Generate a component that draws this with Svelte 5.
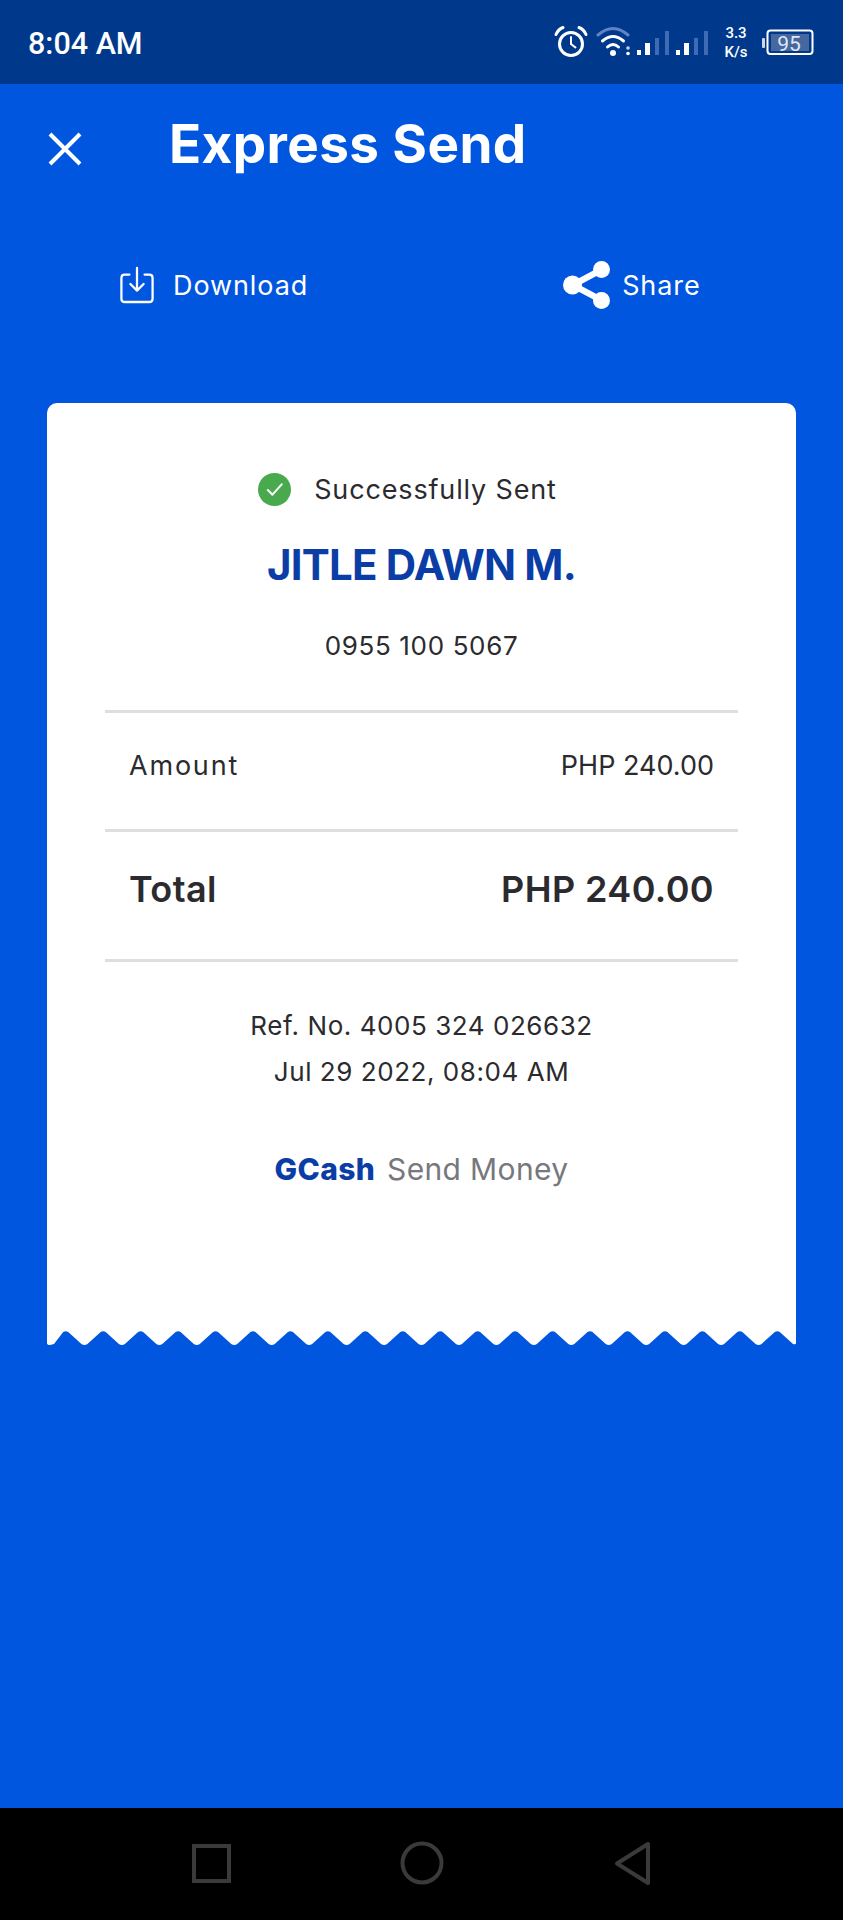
<script>
  const transaction = {
    recipient: 'JITLE DAWN M.',
    phone: '0955 100 5067',
    amount: 'PHP 240.00',
    reference: 'Ref. No. 4005 324 026632',
    date: 'Jul 29 2022, 08:04 AM',
  };

  // Torn paper edge along the bottom of the receipt
  const teeth = 20;
  const toothWidth = 749 / teeth;
  let edge = 'M0 0V12Q0 14 3 14';
  for (let i = 0; i < teeth; i++) {
    const x = i * toothWidth;
    const mid = x + toothWidth / 2;
    if (i > 0) edge += `Q${x} 15 ${x + 3} 13`;
    else edge += `L${x + 7} 13`;
    edge += `L${mid - 2.5} 1`;
    edge += `Q${mid} -0.5 ${mid + 2.5} 1`;
    edge += `L${x + toothWidth - 3} 13`;
  }
  edge += 'Q749 14 749 12V0Z';

  const signalGroups = [639, 678];
</script>

<div class="screen">
  <div class="status-bar">
    <span class="clock">8:04 AM</span>
    <svg class="status-icons" width="270" height="40" viewBox="550 24 270 40">
      <!-- alarm -->
      <g fill="none" stroke="#fff" stroke-linecap="round">
        <circle cx="571" cy="44" r="11.500" stroke-width="3" />
        <path d="M571 37v7l4.500 3.500" stroke-width="2" />
        <path d="M556 34.500q2-5 7-7M586 34.500q-2-5-7-7" stroke-width="3" />
      </g>
      <!-- wifi -->
      <g fill="none" stroke-linecap="round">
        <path d="M598 35q15-13 30 0" stroke="#5f83c4" stroke-width="3" />
        <path d="M602.500 41q10.500-9 21 0" stroke="#fff" stroke-width="3" />
        <path d="M607.500 47q5.500-5 11 0" stroke="#fff" stroke-width="3" />
      </g>
      <circle cx="613" cy="53" r="3" fill="#fff" />
      <circle cx="628" cy="48" r="1.800" fill="#c8d4ea" />
      <circle cx="628" cy="53.500" r="1.800" fill="#fff" />
      <!-- signal bars -->
      {#each signalGroups as x}
        <rect x={x - 2} y="50" width="4" height="5" fill="#fff" />
        <rect x={x + 6} y="43" width="5" height="12" fill="#fff" />
        <rect x={x + 16} y="38" width="4" height="17" fill="#3f6ab4" />
        <rect x={x + 26} y="31" width="4" height="24" fill="#3f6ab4" />
      {/each}
      <!-- network speed -->
      <text x="736" y="38" class="speed">3.3</text>
      <text x="736" y="57" class="speed">K/s</text>
      <!-- battery -->
      <rect x="762" y="38" width="3" height="10" rx="1" fill="#fff" opacity="0.8" />
      <rect x="767.500" y="30.500" width="45" height="23.500" rx="3" fill="none" stroke="#fff" stroke-width="2" />
      <rect x="771" y="34" width="38" height="17" fill="#45689f" />
      <text x="789" y="50.500" class="level">95</text>
    </svg>
  </div>

  <main class="content">
    <header class="title-row">
      <svg class="close" width="34" height="34" viewBox="0 0 34 34">
        <path d="M2 2l30 30M32 2L2 32" fill="none" stroke="#fff" stroke-width="4" />
      </svg>
      <h1>Express Send</h1>
    </header>

    <div class="actions">
      <div class="action download">
        <svg width="34" height="40" viewBox="0 0 36 40" fill="none" stroke="#fff" stroke-width="2.400" stroke-linecap="round" stroke-linejoin="round">
          <path d="M10 9H5q-3.500 0-3.500 3.500v22q0 3.500 3.500 3.500h26q3.500 0 3.500-3.500v-22q0-3.500-3.500-3.500h-5" />
          <path d="M18 2v24M11 19l7 7 7-7" />
        </svg>
        <span>Download</span>
      </div>
      <div class="action share">
        <svg width="48" height="48" viewBox="0 0 48 48">
          <path d="M38 9L10 24l28 15" fill="none" stroke="#fff" stroke-width="6.500" />
          <circle cx="38.500" cy="8.500" r="8.500" fill="#fff" />
          <circle cx="9.500" cy="24" r="9.500" fill="#fff" />
          <circle cx="38.500" cy="39.500" r="8.500" fill="#fff" />
        </svg>
        <span>Share</span>
      </div>
    </div>

    <section class="receipt">
      <div class="paper">
        <div class="sent">
          <svg width="33" height="33" viewBox="0 0 32 32">
            <circle cx="16" cy="16" r="16" fill="#48a94d" />
            <path d="M9.500 16.500l4.500 4.500 9-10" fill="none" stroke="#fff" stroke-width="2" stroke-linecap="round" stroke-linejoin="round" />
          </svg>
          <span>Successfully Sent</span>
        </div>
        <div class="recipient">{transaction.recipient}</div>
        <div class="phone">{transaction.phone}</div>

        <div class="row amount">
          <span class="label">Amount</span>
          <span>{transaction.amount}</span>
        </div>
        <div class="row total">
          <span>Total</span>
          <span>{transaction.amount}</span>
        </div>

        <div class="meta">
          <div>{transaction.reference}</div>
          <div>{transaction.date}</div>
        </div>

        <div class="brand">
          <b>GCash</b>
          <span>Send Money</span>
        </div>
      </div>
      <svg class="edge" width="749" height="15" viewBox="0 0 749 15">
        <path d={edge} fill="#fff" />
      </svg>
    </section>
  </main>

  <nav class="nav-bar">
    <svg width="843" height="112" viewBox="0 0 843 112" fill="none" stroke="#3a3a3a" stroke-width="4">
      <rect x="194" y="38" width="35" height="35" />
      <circle cx="422" cy="55" r="19.500" />
      <path d="M648 36v39l-31-19.500z" stroke-linejoin="round" />
    </svg>
  </nav>
</div>

<style>
  :global(body) {
    margin: 0;
    background: #0056df;
  }

  .screen {
    width: 843px;
    height: 1920px;
    display: flex;
    flex-direction: column;
    font-family: Inter, 'Liberation Sans', sans-serif;
    color: #2b2b2f;
  }

  .status-bar {
    height: 84px;
    flex-shrink: 0;
    background: #00398c;
    display: flex;
    align-items: center;
    justify-content: space-between;
    padding: 0 23px 0 28px;
    color: #fff;
  }

  .clock {
    font-family: Roboto, sans-serif;
    font-size: 30.5px;
    font-weight: 500;
    padding-top: 2px;
  }

  .status-icons {
    display: block;
    margin-top: 4px;
  }

  .speed {
    fill: #fff;
    font-family: Roboto, sans-serif;
    font-size: 15px;
    font-weight: 500;
    text-anchor: middle;
  }

  .level {
    fill: #dfe6f2;
    font-family: Roboto, sans-serif;
    font-size: 21px;
    text-anchor: middle;
  }

  .content {
    flex: 1;
    background: #0056df;
  }

  .title-row {
    display: flex;
    align-items: center;
    padding: 25px 0 0 48px;
    height: 70px;
  }

  .close {
    margin-top: 10px;
  }

  h1 {
    margin: 0 0 0 87px;
    color: #fff;
    font-size: 53px;
    font-weight: 700;
    letter-spacing: 0.4px;
  }

  .actions {
    display: flex;
    margin-top: 76px;
    height: 60px;
    align-items: center;
    color: #fff;
    font-size: 27px;
    letter-spacing: 0.9px;
  }

  .action {
    display: flex;
    align-items: center;
  }

  .download {
    margin-left: 120px;
    gap: 19px;
  }

  .share {
    margin-left: 255px;
    gap: 11px;
  }

  .receipt {
    margin: 88px 47px 0;
  }

  .paper {
    background: #fff;
    border-radius: 10px 10px 0 0;
    height: 928px;
    padding: 0 58px;
    display: flex;
    flex-direction: column;
    align-items: stretch;
    box-sizing: border-box;
  }

  .edge {
    display: block;
  }

  .sent {
    display: flex;
    align-items: center;
    justify-content: center;
    gap: 23px;
    margin-top: 70px;
    height: 32px;
    font-size: 27px;
    letter-spacing: 0.85px;
    padding-right: 28px;
  }

  .recipient {
    margin-top: 35px;
    text-align: center;
    color: #0a3ea6;
    font-size: 42px;
    font-weight: 700;
    letter-spacing: -0.8px;
    line-height: 50px;
  }

  .phone {
    margin-top: 39px;
    text-align: center;
    font-size: 26px;
    letter-spacing: 0.65px;
    line-height: 34px;
  }

  .row {
    display: flex;
    justify-content: space-between;
    align-items: center;
    padding: 0 24px;
    border-top: 3px solid #dedede;
  }

  .amount {
    margin-top: 47px;
    height: 104px;
    padding-bottom: 12px;
    font-size: 27px;
  }

  .label {
    letter-spacing: 1.8px;
  }

  .total {
    height: 113px;
    padding-bottom: 14px;
    font-size: 36px;
    font-weight: 600;
    letter-spacing: 0.4px;
    border-bottom: 3px solid #dedede;
  }

  .meta {
    margin-top: 41px;
    text-align: center;
    font-size: 26px;
    letter-spacing: 0.55px;
    line-height: 46px;
  }

  .brand {
    margin-top: 56px;
    display: flex;
    justify-content: center;
    align-items: center;
    gap: 12px;
    font-size: 30px;
    letter-spacing: 0.35px;
  }

  .brand b {
    color: #0a3ea6;
    font-weight: 800;
  }

  .brand span {
    color: #77777d;
  }

  .nav-bar {
    height: 112px;
    flex-shrink: 0;
    background: #000;
  }

  .nav-bar svg {
    display: block;
  }
</style>
